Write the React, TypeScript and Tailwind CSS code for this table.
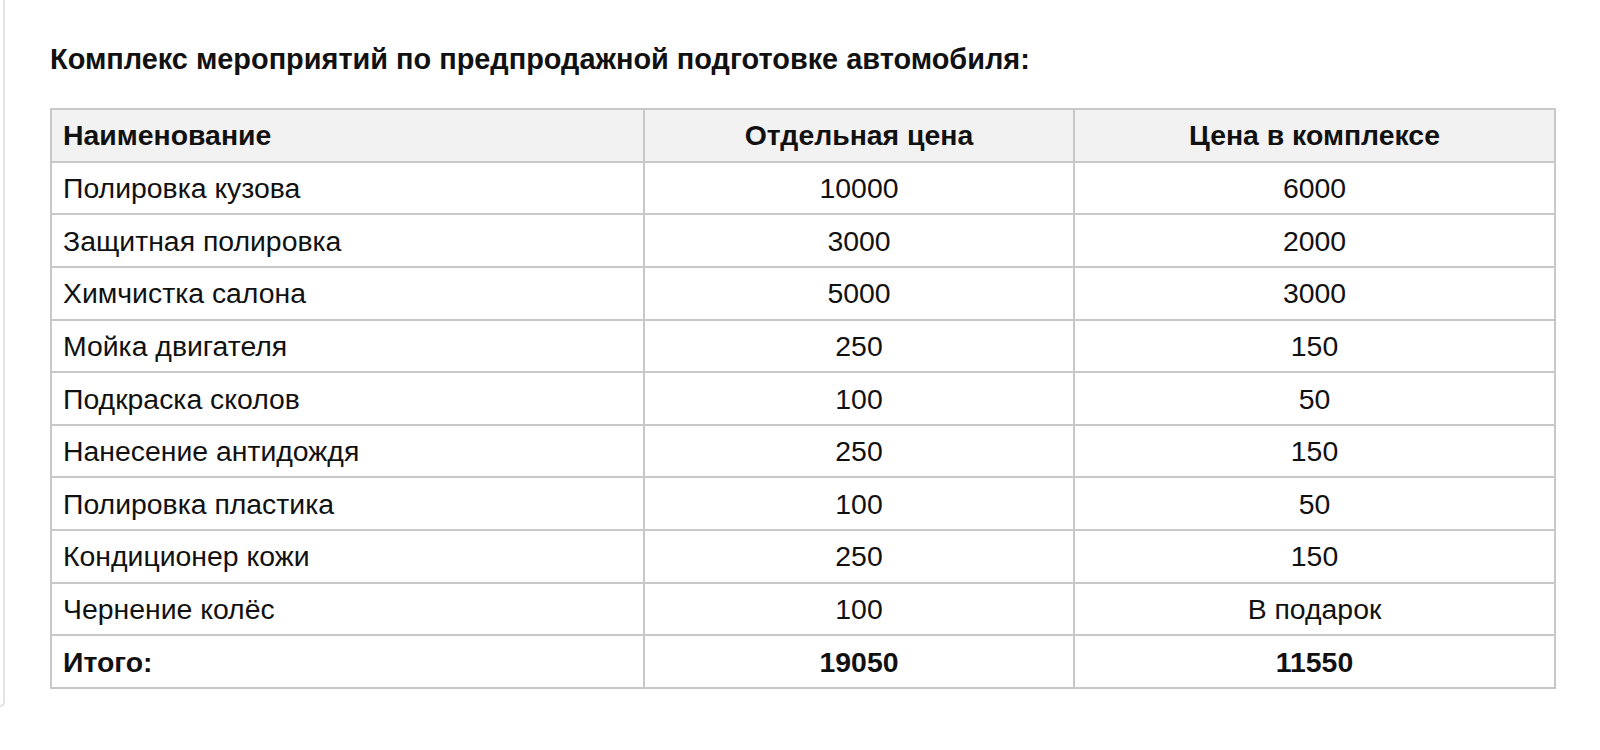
const rows: [string, string, string][] = [
  ["Полировка кузова", "10000", "6000"],
  ["Защитная полировка", "3000", "2000"],
  ["Химчистка салона", "5000", "3000"],
  ["Мойка двигателя", "250", "150"],
  ["Подкраска сколов", "100", "50"],
  ["Нанесение антидождя", "250", "150"],
  ["Полировка пластика", "100", "50"],
  ["Кондиционер кожи", "250", "150"],
  ["Чернение колёс", "100", "В подарок"],
];

const cell = "border-2 border-[#c8c8c8] h-[52.65px] px-[11px] py-0 align-middle";

export default function App() {
  return (
    <div className="flex min-h-[750px] bg-white font-['Liberation_Sans',Arial,sans-serif] text-[28.4px] leading-[32px] text-[#111]">
      <div className="h-[707px] w-[5px] shrink-0 rounded-br-[10px] border-r-2 border-b-2 border-[#e4e4e4]" />
      <div className="pl-[45px] pt-[43px]">
        <h2 className="text-[28.9px] font-bold">
          Комплекс мероприятий по предпродажной подготовке автомобиля:
        </h2>
        <table className="mt-[33px] w-[1504px] table-fixed border-collapse">
          <colgroup>
            <col className="w-[593px]" />
            <col className="w-[430px]" />
            <col className="w-[481px]" />
          </colgroup>
          <thead>
            <tr className="bg-[#f2f2f2] font-bold">
              <th className={`${cell} text-left`}>Наименование</th>
              <th className={`${cell} text-center`}>Отдельная цена</th>
              <th className={`${cell} text-center`}>Цена в комплексе</th>
            </tr>
          </thead>
          <tbody>
            {rows.map(([name, single, bundle]) => (
              <tr key={name}>
                <td className={`${cell} text-left`}>{name}</td>
                <td className={`${cell} text-center`}>{single}</td>
                <td className={`${cell} text-center`}>{bundle}</td>
              </tr>
            ))}
            <tr className="font-bold">
              <td className={`${cell} text-left`}>Итого:</td>
              <td className={`${cell} text-center`}>19050</td>
              <td className={`${cell} text-center`}>11550</td>
            </tr>
          </tbody>
        </table>
      </div>
    </div>
  );
}
